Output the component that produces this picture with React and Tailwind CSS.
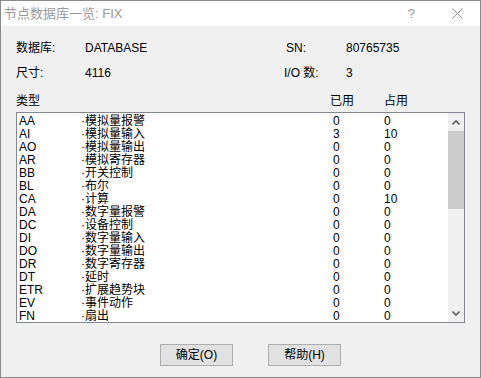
const rows = [
  ['AA', '模拟量报警', '0', '0'],
  ['AI', '模拟量输入', '3', '10'],
  ['AO', '模拟量输出', '0', '0'],
  ['AR', '模拟寄存器', '0', '0'],
  ['BB', '开关控制', '0', '0'],
  ['BL', '布尔', '0', '0'],
  ['CA', '计算', '0', '10'],
  ['DA', '数字量报警', '0', '0'],
  ['DC', '设备控制', '0', '0'],
  ['DI', '数字量输入', '0', '0'],
  ['DO', '数字量输出', '0', '0'],
  ['DR', '数字寄存器', '0', '0'],
  ['DT', '延时', '0', '0'],
  ['ETR', '扩展趋势块', '0', '0'],
  ['EV', '事件动作', '0', '0'],
  ['FN', '扇出', '0', '0'],
];

const font = { fontFamily: '"Liberation Sans", "Noto Sans CJK SC", sans-serif' };

const App = () => {
  return (
    <div
      className="w-[481px] h-[378px] border border-[#8a8a8a] bg-[#f0f0f0] flex flex-col text-[12px] text-black overflow-hidden"
      style={font}
    >
      {/* Title bar */}
      <div className="h-[25px] bg-white flex items-center shrink-0">
        <span className="ml-[3px] text-[#999999] text-[13px]">节点数据库一览: FIX</span>
        <span className="ml-auto mr-[37px] text-[#999999] text-[13px]">?</span>
        <svg width="11" height="11" viewBox="0 0 11 11" className="mr-[17px]">
          <path d="M0.5 0.5 L10.5 10.5 M10.5 0.5 L0.5 10.5" stroke="#8a8a8a" strokeWidth="1" />
        </svg>
      </div>

      {/* Body */}
      <div className="flex flex-col pl-[15px]">
        <div className="h-[16px] mt-[14px] flex items-center">
          <span className="w-[69px]">数据库:</span>
          <span className="w-[201px]">DATABASE</span>
          <span className="w-[60px]">SN:</span>
          <span>80765735</span>
        </div>
        <div className="h-[16px] mt-[9px] flex items-center">
          <span className="w-[69px]">尺寸:</span>
          <span className="w-[199px]">4116</span>
          <span className="w-[62px]">I/O 数:</span>
          <span>3</span>
        </div>
        <div className="h-[16px] mt-[12px] flex items-center">
          <span className="w-[314px]">类型</span>
          <span className="w-[54px]">已用</span>
          <span>占用</span>
        </div>

        {/* List */}
        <div className="mt-[3px] w-[449px] h-[211px] border border-[#828790] bg-white flex overflow-hidden">
          <div className="flex-1 pt-[2px] pl-[2px] overflow-hidden">
            {rows.map(([code, name, used, occ]) => (
              <div key={code} className="h-[13px] flex items-center leading-[13px]">
                <span className="w-[62px]">{code}</span>
                <span className="w-[252px]">·{name}</span>
                <span className="w-[51px]">{used}</span>
                <span>{occ}</span>
              </div>
            ))}
          </div>
          <div className="w-[16px] bg-[#f0f0f0] flex flex-col">
            <div className="h-[18px] flex items-center justify-center">
              <svg width="8" height="5" viewBox="0 0 8 5">
                <path d="M0.5 4.5 L4 1 L7.5 4.5" stroke="#606060" strokeWidth="1.6" fill="none" />
              </svg>
            </div>
            <div className="h-[78px] bg-[#cdcdcd]"></div>
            <div className="flex-1"></div>
            <div className="h-[18px] flex items-center justify-center">
              <svg width="8" height="5" viewBox="0 0 8 5">
                <path d="M0.5 0.5 L4 4 L7.5 0.5" stroke="#606060" strokeWidth="1.6" fill="none" />
              </svg>
            </div>
          </div>
        </div>

        {/* Buttons */}
        <div className="mt-[21px] flex">
          <button className="ml-[144px] w-[73px] h-[22px] bg-[#e1e1e1] border border-[#adadad] flex items-center justify-center">
            确定(O)
          </button>
          <button className="ml-[35px] w-[73px] h-[22px] bg-[#e1e1e1] border border-[#adadad] flex items-center justify-center">
            帮助(H)
          </button>
        </div>
      </div>
    </div>
  );
};

export default App;
